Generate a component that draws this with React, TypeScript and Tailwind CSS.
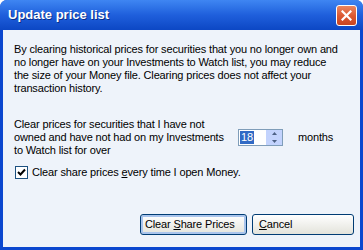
import React from 'react'

const font = { fontFamily: '"Liberation Sans", Arial, sans-serif' }

function CloseButton() {
  return (
    <div className="flex h-[21px] w-[21px] items-center justify-center rounded-[3px] border border-white bg-gradient-to-b from-[#e9865f] via-[#dc5a34] to-[#c9441f]">
      <svg width="11" height="11" viewBox="0 0 11 11">
        <path d="M1.5 1.5 L9.5 9.5 M9.5 1.5 L1.5 9.5" stroke="white" strokeWidth="2.2" strokeLinecap="square" />
      </svg>
    </div>
  )
}

function SpinBox() {
  return (
    <div className="flex h-[17px] w-[45px] border border-[#7f9db9] bg-white">
      <div className="flex flex-1 items-center pl-[1px]">
        <span className="bg-[#316ac5] px-[1px] text-[11px] leading-[13px] text-white">18</span>
      </div>
      <div className="flex w-[17px] flex-col border-l border-white bg-[#c3d3fd]">
        <div className="flex flex-1 items-center justify-center">
          <svg width="5" height="3" viewBox="0 0 5 3">
            <path d="M0 3 L2.5 0 L5 3 Z" fill="#4d6185" />
          </svg>
        </div>
        <div className="flex flex-1 items-center justify-center">
          <svg width="5" height="3" viewBox="0 0 5 3">
            <path d="M0 0 L2.5 3 L5 0 Z" fill="#4d6185" />
          </svg>
        </div>
      </div>
    </div>
  )
}

function CheckBox() {
  return (
    <div className="flex h-[13px] w-[13px] items-center justify-center border border-[#1c5180] bg-white">
      <svg width="9" height="9" viewBox="0 0 9 9">
        <path d="M1 4 L3.5 6.5 L8 1.5" fill="none" stroke="black" strokeWidth="2" />
      </svg>
    </div>
  )
}

function XpButton({ children, primary }: { children: React.ReactNode; primary?: boolean }) {
  return (
    <button
      type="button"
      className={
        primary
          ? 'h-[21px] w-[107px] rounded-[3px] border border-[#003c74] bg-gradient-to-b from-[#ffffff] to-[#e3e3db] pl-[4px] text-left text-[11px] leading-[13px] tracking-[-0.15px] text-black shadow-[inset_0_0_0_2px_#a9c4ec]'
          : 'h-[21px] w-[102px] rounded-[3px] border border-[#003c74] bg-gradient-to-b from-[#ffffff] to-[#e3e3db] pl-[6px] text-left text-[11px] leading-[13px] tracking-[-0.15px] text-black'
      }
    >
      {children}
    </button>
  )
}

export default function App() {
  return (
    <div className="h-[250px] w-[363px] overflow-hidden bg-white" style={font}>
      <div className="flex h-full flex-col overflow-hidden rounded-t-[7px] bg-[#0a47cf]">
        <div className="flex h-[30px] shrink-0 items-center justify-between bg-gradient-to-b from-[#3f86f2] via-[#1f5fdc] to-[#0c47c4] pl-[8px] pr-[6px]">
          <span className="text-[13px] font-bold text-white [text-shadow:1px_1px_0_#0a2f8a]">
            Update price list
          </span>
          <CloseButton />
        </div>
        <div className="mx-[3px] mb-[3px] flex flex-1 flex-col bg-[#eef3fa] pl-[11px] pr-[6px] pt-[13px] text-[11px] leading-[13px] tracking-[-0.15px] text-black">
          <p>
            By clearing historical prices for securities that you no longer own and
            <br />
            no longer have on your Investments to Watch list, you may reduce
            <br />
            the size of your Money file. Clearing prices does not affect your
            <br />
            transaction history.
          </p>
          <div className="mt-[23px] flex items-center">
            <p className="w-[224px]">
              Clear prices for securities that I have not
              <br />
              owned and have not had on my Investments
              <br />
              to Watch list for over
            </p>
            <SpinBox />
            <span className="ml-[15px]">months</span>
          </div>
          <div className="mt-[9px] flex items-center gap-[4px] pl-[1px]">
            <CheckBox />
            <span>
              Clear share prices <span className="underline">e</span>very time I open Money.
            </span>
          </div>
          <div className="mt-[35px] flex justify-end gap-[5px]">
            <XpButton primary>
              Clear <span className="underline">S</span>hare Prices
            </XpButton>
            <XpButton>
              <span className="underline">C</span>ancel
            </XpButton>
          </div>
        </div>
      </div>
    </div>
  )
}
